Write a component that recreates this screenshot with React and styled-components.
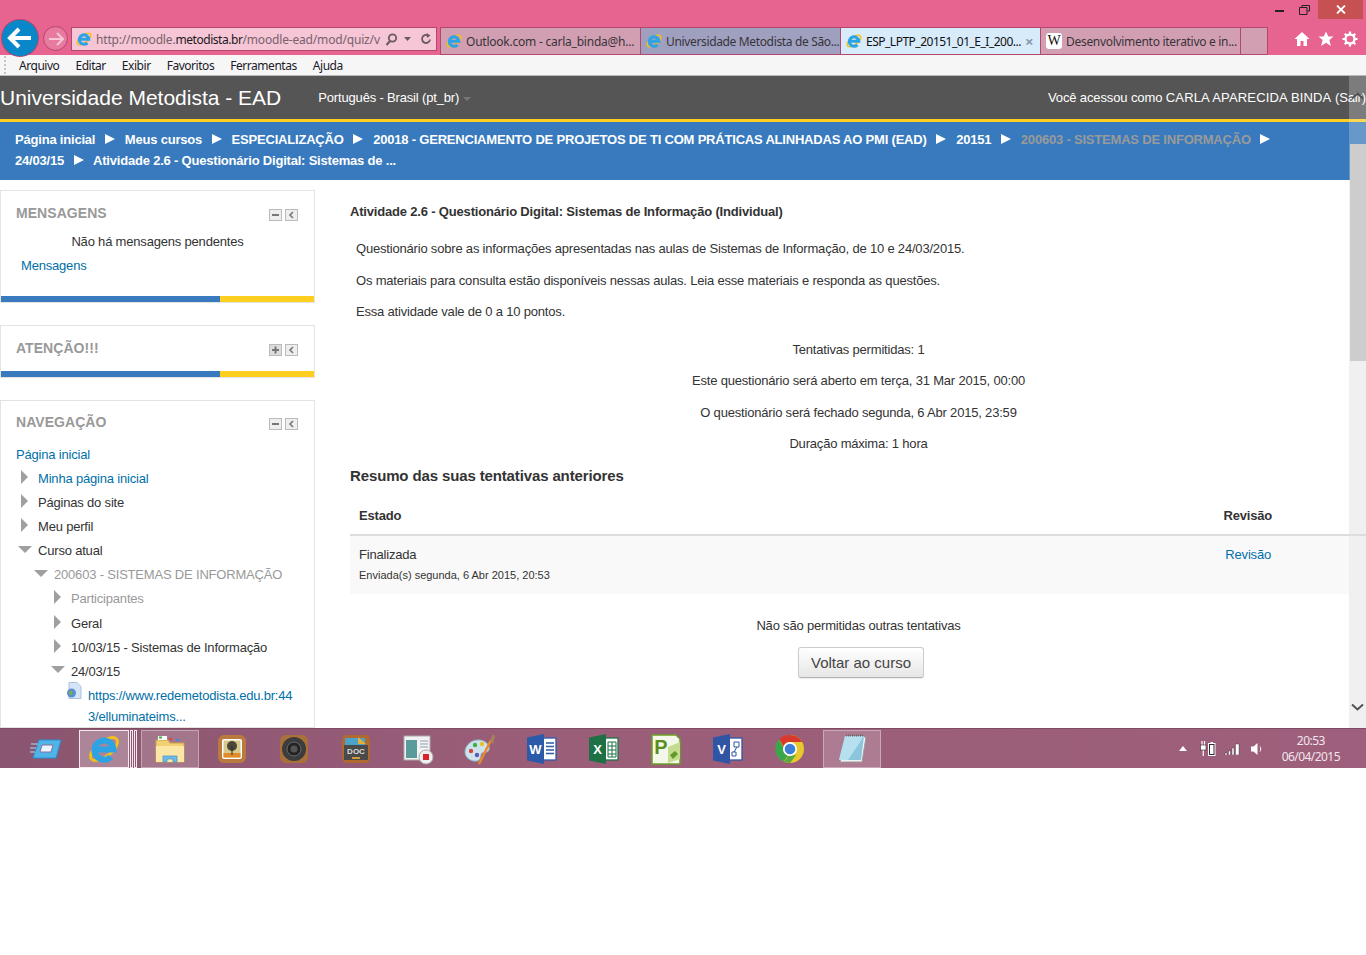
import React from "react";
import styled, { createGlobalStyle } from "styled-components";

const GlobalStyle = createGlobalStyle`
  html, body {
    margin: 0;
    background: #fff;
  }
  body {
    font-family: "Liberation Sans", Arial, sans-serif;
    font-size: 13px;
    color: #333;
  }
`;

const Screen = styled.div`
  width: 1366px;
  height: 768px;
  display: flex;
  flex-direction: column;
  overflow: hidden;
`;

/* ---------- browser chrome ---------- */

const Chrome = styled.div`
  height: 55px;
  flex: none;
  background: #e6648f;
  display: flex;
  justify-content: space-between;
`;

const NavCluster = styled.div`
  display: flex;
  align-items: flex-start;
  padding-top: 27px;
`;

const BackButton = styled.div`
  width: 36px;
  height: 36px;
  margin: -7px 0 0 2px;
  border-radius: 50%;
  background: #0a87c8;
  box-shadow: 0 0 0 1px #b4476e;
  position: relative;
  z-index: 2;
  display: flex;
  align-items: center;
  justify-content: center;
`;

const ForwardButton = styled.div`
  width: 25px;
  height: 25px;
  margin: -1px 0 0 5px;
  box-sizing: border-box;
  border-radius: 50%;
  border: 1px solid #b4476e;
  background: #e97a9f;
  display: flex;
  align-items: center;
  justify-content: center;
`;

const AddressBar = styled.div`
  width: 366px;
  height: 24px;
  margin-left: 3px;
  border: 1px solid #b4476e;
  background: #f6c5d6;
  display: flex;
  align-items: center;
  font-family: "Noto Sans", sans-serif;
  font-size: 12px;
  padding-left: 4px;
  box-sizing: border-box;
`;

const Url = styled.div`
  width: 285px;
  margin-left: 4px;
  white-space: nowrap;
  color: #77626a;
  letter-spacing: -0.17px;
  b {
    font-weight: 400;
    color: #1a1a1a;
    letter-spacing: -0.45px;
  }
`;

const AddressTools = styled.div`
  display: flex;
  align-items: center;
  gap: 6px;
  margin-left: 4px;
`;

const Tabs = styled.div`
  display: flex;
  height: 28px;
  margin-left: 3px;
  border: solid #b4476e;
  border-width: 1px 0 1px 1px;
  box-sizing: border-box;
`;

const Tab = styled.div`
  width: 200px;
  box-sizing: border-box;
  border-right: 1px solid #b4476e;
  background: ${(p) => p.$bg};
  color: ${(p) => (p.$active ? "#111" : "#38343a")};
  display: flex;
  align-items: center;
  padding-left: 5px;
  gap: 4px;
  font-family: "Noto Sans", sans-serif;
  font-size: 12px;
  white-space: nowrap;
  overflow: hidden;
`;

const TabTitle = styled.span`
  flex: 1;
  letter-spacing: ${(p) => p.$spacing}px;
`;

const TabClose = styled.span`
  color: #8a9aa8;
  font-size: 15px;
  width: 15px;
  font-weight: 700;
  line-height: 1;
`;

const NewTab = styled.div`
  width: 27px;
  box-sizing: border-box;
  background: #d19fb1;
  border-right: 1px solid #b4476e;
`;

const WikiBadge = styled.span`
  width: 16px;
  height: 16px;
  background: #fff;
  border-radius: 3px;
  color: #111;
  font-family: "Liberation Serif", serif;
  font-size: 14px;
  line-height: 16px;
  text-align: center;
  flex: none;
`;

const RightCluster = styled.div`
  display: flex;
  flex-direction: column;
  align-items: flex-end;
`;

const WindowControls = styled.div`
  display: flex;
  height: 19px;
  align-items: center;
  padding-right: 3px;
`;

const WindowButton = styled.div`
  width: ${(p) => p.$width}px;
  height: 19px;
  background: ${(p) => (p.$close ? "#c75052" : "transparent")};
  display: flex;
  align-items: center;
  justify-content: center;
`;

const Toolbar = styled.div`
  display: flex;
  gap: 8px;
  padding: 12px 8px 0 0;
`;

const MenuBar = styled.div`
  height: 21px;
  flex: none;
  box-sizing: border-box;
  background: #f6f6f6;
  border-bottom: 1px solid #b9b9b9;
  display: flex;
  align-items: center;
  gap: 16px;
  padding-left: 4px;
  font-family: "Noto Sans", sans-serif;
  font-size: 12px;
  letter-spacing: -0.46px;
  color: #1a1a2a;
`;

const MenuGrip = styled.div`
  width: 2px;
  height: 18px;
  margin-right: -3px;
  background: repeating-linear-gradient(#c4c4c4 0 2px, transparent 2px 4px);
`;

/* ---------- page ---------- */

const Page = styled.div`
  position: relative;
  height: 652px;
  flex: none;
  overflow: hidden;
  background: #fff;
`;

const SiteHeader = styled.header`
  height: 46px;
  box-sizing: border-box;
  background: #555;
  border-bottom: 3px solid #ffcf1f;
  color: #fff;
  display: flex;
  align-items: center;
  justify-content: space-between;
  white-space: nowrap;
`;

const HeaderLeft = styled.div`
  display: flex;
  align-items: center;
`;

const Brand = styled.a`
  font-size: 21px;
`;

const Language = styled.span`
  margin-left: 37px;
  letter-spacing: -0.17px;
  display: flex;
  align-items: center;
`;

const Caret = styled.i`
  width: 0;
  height: 0;
  margin: 2px 0 0 4px;
  border: 4px solid transparent;
  border-top-color: #777;
  border-bottom: 0;
`;

const Login = styled.div`
  letter-spacing: -0.12px;
  b {
    font-weight: 400;
    letter-spacing: 0.16px;
  }
`;

const Breadcrumb = styled.nav`
  height: 58px;
  box-sizing: border-box;
  background: #387abd;
  padding: 7px 80px 0 15px;
  color: #fff;
  font-weight: 700;
  line-height: 21px;
  letter-spacing: -0.2px;
`;

const Crumb = styled.span`
  color: ${(p) => (p.$muted ? "#9a9a9a" : "#fff")};
  white-space: nowrap;
`;

const CrumbSep = styled.span`
  display: inline-block;
  width: 0;
  height: 0;
  margin: 0 6.6px 0 9.5px;
  border-style: solid;
  border-width: 5px 0 5px 10px;
  border-color: transparent transparent transparent #fff;
`;

const Columns = styled.div`
  display: flex;
  align-items: flex-start;
`;

const Sidebar = styled.aside`
  width: 315px;
  flex: none;
  padding-top: 10px;
  display: flex;
  flex-direction: column;
  gap: 22px;
`;

const Block = styled.section`
  border: 1px solid #e3e3e3;
  box-sizing: border-box;
`;

const BlockHead = styled.div`
  height: 24px;
  margin-top: ${(p) => p.$top || 10}px;
  padding: 0 16px 0 15px;
  display: flex;
  align-items: center;
  justify-content: space-between;
  h2 {
    margin: 0;
    font-size: 14px;
    font-weight: 700;
    color: #999;
    letter-spacing: 0.05px;
  }
`;

const BlockTools = styled.div`
  display: flex;
  gap: 3px;
  margin-top: 4px;
`;

const BlockBody = styled.div`
  padding: 5px 0 18px;
  line-height: 24px;
  letter-spacing: -0.19px;
`;

const Centered = styled.div`
  text-align: center;
`;

const Link = styled.a`
  color: #0070a8;
`;

const BlockLink = styled(Link)`
  display: block;
  padding-left: 20px;
`;

const BlockBar = styled.div`
  height: 6px;
  margin-top: ${(p) => p.$gap || 0}px;
  background: linear-gradient(90deg, #387abd 0 219px, #ffcf1f 219px);
`;

const NavTree = styled.div`
  padding-top: 8px;
  letter-spacing: -0.19px;
`;

const NavRow = styled.div`
  height: 24.15px;
  display: flex;
  align-items: center;
  padding-left: ${(p) => p.$indent}px;
  color: ${(p) => (p.$muted ? "#999" : "#333")};
  white-space: nowrap;
`;

const NavLeaf = styled.div`
  display: flex;
  align-items: flex-start;
  padding: 2px 0 0 65px;
  line-height: 21px;
`;

const LeafLink = styled(Link)`
  width: 210px;
  word-break: break-all;
`;

const LeafIcon = styled.svg`
  width: 16px;
  height: 17px;
  flex: none;
  margin: -3px 6px 0 0;
`;

const NavSlot = styled.span`
  width: 22px;
  flex: none;
  display: flex;
  align-items: center;
  padding-left: ${(p) => (p.$open ? 2 : 5)}px;
  box-sizing: border-box;
`;

const ArrowRight = styled.i`
  width: 0;
  height: 0;
  margin-top: -3px;
  border-style: solid;
  border-width: 7px 0 7px 7px;
  border-color: transparent transparent transparent #a0a0a0;
`;

const ArrowDown = styled.i`
  width: 0;
  height: 0;
  margin-top: -3px;
  border-style: solid;
  border-width: 7px 7px 0 7px;
  border-color: #a0a0a0 transparent transparent transparent;
`;

const Main = styled.main`
  flex: 1;
  min-width: 0;
  padding: 23px 0 0 35px;
  letter-spacing: -0.19px;
`;

const ActivityTitle = styled.div`
  font-weight: 700;
  line-height: 18px;
  margin-bottom: 19px;
  letter-spacing: -0.18px;
`;

const Intro = styled.p`
  margin: 0 0 13.6px 6px;
  line-height: 18px;
`;

const InfoBlock = styled.div`
  padding-top: 6px;
  margin-bottom: -1px;
`;

const InfoLine = styled.p`
  margin: 0 0 13.5px;
  width: 1017px;
  text-align: center;
  line-height: 18px;
`;

const SectionTitle = styled.h3`
  margin: 0;
  font-size: 15px;
  line-height: 20px;
  font-weight: 700;
  letter-spacing: -0.13px;
`;

const Attempts = styled.div`
  margin-top: 10px;
`;

const AttemptsHead = styled.div`
  height: 40px;
  box-sizing: border-box;
  border-bottom: 2px solid #ddd;
  display: flex;
  align-items: center;
  justify-content: space-between;
  padding: 1px 94px 0 9px;
  font-weight: 700;
  position: relative;
  z-index: 1;
`;

const AttemptRow = styled.div`
  height: 58px;
  background: #f9f9f9;
  display: flex;
  justify-content: space-between;
  padding: 9px 95px 0 9px;
  box-sizing: border-box;
  line-height: 20px;
`;

const Submitted = styled.div`
  margin-top: -1px;
  font-size: 11px;
  line-height: 22px;
  letter-spacing: 0;
`;

const Closing = styled.div`
  width: 1017px;
  margin-top: 23px;
  text-align: center;
  line-height: 18px;
`;

const BackToCourse = styled.button`
  display: block;
  margin: 12px 0 0 448px;
  width: 126px;
  height: 31px;
  padding: 0;
  border: 1px solid #ccc;
  border-bottom-color: #b3b3b3;
  border-radius: 3px;
  background: linear-gradient(#fff, #e6e6e6);
  color: #444;
  font-family: inherit;
  font-size: 15px;
  box-shadow: 0 1px 1px rgba(0, 0, 0, 0.08);
`;

const Scrollbar = styled.div`
  position: absolute;
  top: 0;
  right: 0;
  bottom: 0;
  width: 17px;
  background: linear-gradient(rgba(240, 240, 240, 0.25) 0 104px, #f0f0f0 104px);
  display: flex;
  flex-direction: column;
  align-items: center;
  justify-content: space-between;
  padding: 16px 0 17px;
  box-sizing: border-box;
`;

const ScrollThumb = styled.div`
  position: absolute;
  top: 68px;
  left: 1px;
  right: 0;
  height: 217px;
  background: #cdcdcd;
`;

/* ---------- taskbar ---------- */

const Taskbar = styled.footer`
  height: 40px;
  flex: none;
  border-top: 1px solid #7e4a64;
  box-sizing: border-box;
  background: linear-gradient(90deg, #8a5570, #9b5e79 40%, #9d5f7b);
  display: flex;
  align-items: center;
  padding-left: 17px;
`;

const TaskSlot = styled.div`
  width: 58px;
  margin-right: 4px;
  height: 38px;
  box-sizing: border-box;
  display: flex;
  align-items: center;
  justify-content: center;
  ${(p) =>
    p.$on &&
    `background: rgba(255,255,255,.18); box-shadow: inset 0 0 0 1px rgba(255,255,255,.35);`}
`;

const IeTaskButton = styled.div`
  width: 50px;
  height: 38px;
  box-sizing: border-box;
  background: rgba(255, 255, 255, 0.28);
  border: 1px solid #f4e9ee;
  display: flex;
  align-items: center;
  justify-content: center;
`;

const StackEdge = styled.div`
  width: 3px;
  height: 38px;
  margin-left: 1px;
  box-sizing: border-box;
  border: 1px solid #f4e9ee;
`;

const StackGap = styled.div`
  width: 4px;
  flex: none;
`;

const Tray = styled.div`
  margin-left: auto;
  display: flex;
  align-items: center;
  padding-right: 26px;
`;

const TrayIcons = styled.div`
  display: flex;
  align-items: center;
  gap: 8px;
  margin-right: 19px;
`;

const Clock = styled.div`
  font-family: "Noto Sans", sans-serif;
  font-size: 12px;
  line-height: 16px;
  text-align: center;
  color: #f3e6ec;
  letter-spacing: -0.55px;
`;

/* ---------- drawn icons ---------- */

const IeLogo = ({ size = 16 }) => (
  <svg width={size} height={size} viewBox="0 0 32 32" style={{ flex: "none" }}>
    <ellipse cx="16" cy="16" rx="16" ry="7.500" fill="none" stroke="#f2bf1c" strokeWidth="3" transform="rotate(-38 16 16)" />
    <path d="M6.500 16.500H25.500A9.500 9.500 0 1 0 22.800 23.800" fill="none" stroke="#2ba3e4" strokeWidth="6" />
  </svg>
);

const Chevron = ({ flip }) => (
  <svg width="13" height="8" viewBox="0 0 13 8" style={{ transform: flip ? "rotate(180deg)" : "none", zIndex: 1 }}>
    <path d="M1 1.500l5.500 5 5.500-5" fill="none" stroke="#505050" strokeWidth="2" />
  </svg>
);

const BlockIcon = ({ kind }) => (
  <svg width="13" height="12" viewBox="0 0 13 12">
    <rect x=".5" y=".5" width="12" height="11" fill={kind === "plus" ? "#ddd" : "#eee"} stroke="#bbb" />
    {kind === "minus" && <rect x="3" y="5" width="7" height="2" fill="#777" />}
    {kind === "plus" && <path d="M3 6h7M6.500 2.500v7" stroke="#777" strokeWidth="2" />}
    {kind === "left" && <path d="M8 3L5 6l3 3" fill="none" stroke="#777" strokeWidth="1.600" />}
  </svg>
);

const StartIcon = () => (
  <svg width="32" height="24" viewBox="0 0 32 24">
    <path d="M9 3h22l-5 18H3z" fill="#4fb4e8" stroke="#2a8fd0" />
    <path d="M12 8h11l-2 7H10z" fill="#eaf6fc" stroke="#8a6ea0" />
    <path d="M1 7h7M0 11h6M0 15h5" stroke="#a9d9f2" />
  </svg>
);

const FolderIcon = () => (
  <svg width="32" height="30" viewBox="0 0 32 30">
    <path d="M2 6h12l2 3h14v19H2z" fill="#f2cf72" stroke="#c9a24e" />
    <path d="M4 2h9v4H4z" fill="#fff" />
    <rect x="5" y="2.500" width="3" height="2" fill="#3fae49" />
    <rect x="15" y="4" width="3" height="2" fill="#d9453c" />
    <rect x="22" y="5" width="3" height="2" fill="#3a8fd8" />
    <path d="M2 12h28v16H2z" fill="#fbe6a6" />
    <path d="M9 28v-6h14v6h-4v-3h-6v3z" fill="#6dbbe8" stroke="#3f8fc4" strokeWidth=".7" />
  </svg>
);

const PhotoAppIcon = () => (
  <svg width="30" height="30" viewBox="0 0 30 30">
    <rect x="1" y="1" width="28" height="28" rx="6" fill="#b87a3f" />
    <rect x="5" y="5" width="20" height="20" rx="2" fill="#fff" />
    <rect x="6.500" y="6.500" width="17" height="17" fill="#d9c88c" />
    <rect x="6.500" y="19" width="17" height="4.500" fill="#e08a28" />
    <circle cx="15" cy="12" r="5" fill="#4c4838" />
    <path d="M15 12v9" stroke="#2b2a22" />
  </svg>
);

const SpeakerIcon = () => (
  <svg width="30" height="30" viewBox="0 0 30 30">
    <rect x="1" y="1" width="28" height="28" rx="6" fill="#a9703a" />
    <circle cx="15" cy="15" r="12" fill="#3c3c3c" />
    <circle cx="15" cy="15" r="7" fill="#242424" stroke="#6a6a6a" />
    <circle cx="15" cy="15" r="3.500" fill="#555" />
  </svg>
);

const DocIcon = () => (
  <svg width="30" height="30" viewBox="0 0 30 30">
    <rect x="1" y="1" width="28" height="28" rx="5" fill="#b06a30" />
    <path d="M4 4h20v8H4z" fill="#4ba3c7" />
    <path d="M17 3l8 7h-8z" fill="#e2b13a" />
    <path d="M3 11h24v15H3z" fill="#4a4a4a" />
    <text x="15" y="20" textAnchor="middle" fontSize="8" fontWeight="700" fill="#ddd" fontFamily="Liberation Sans">DOC</text>
    <rect x="11" y="23" width="8" height="2" fill="#d49a3a" />
  </svg>
);

const RecorderIcon = () => (
  <svg width="32" height="32" viewBox="0 0 32 32">
    <rect x="2" y="3" width="26" height="24" fill="#f2f2f2" stroke="#aaa" />
    <rect x="4" y="7" width="11" height="18" fill="#5a9a9a" />
    <path d="M18 8h8M18 11h8M18 14h8" stroke="#8fa0b0" />
    <circle cx="24" cy="24" r="7" fill="#eee" stroke="#aaa" />
    <rect x="21" y="21" width="6" height="6" fill="#d8232a" />
  </svg>
);

const PaintIcon = () => (
  <svg width="32" height="32" viewBox="0 0 32 32">
    <path d="M1 19c0-7 7-13 15-12 7 1 10 6 9 10-1 3-5 2-7 3s0 7-5 8c-7 1-12-4-12-9z" fill="#cfe3ec" stroke="#8fb3c4" />
    <circle cx="7" cy="18" r="2.200" fill="#d9453c" />
    <circle cx="11" cy="12" r="2.200" fill="#3fae49" />
    <circle cx="18" cy="11" r="2.200" fill="#e8c02c" />
    <circle cx="13" cy="22" r="2.200" fill="#5a5ab8" />
    <path d="M15 31L27 7" stroke="#e88a2c" strokeWidth="2.500" />
    <path d="M26 8l3-7 2 2-2 8z" fill="#a88258" />
  </svg>
);

const OfficeIcon = ({ color, letter, children }) => (
  <svg width="32" height="32" viewBox="0 0 32 32">
    <rect x="14" y="5" width="16" height="22" fill="#fff" stroke={color} strokeWidth="1.300" />
    {children}
    <path d="M1 4.500L18 1v30L1 27.500z" fill={color} />
    <text x="9.500" y="21" textAnchor="middle" fontSize="13" fontWeight="700" fill="#fff" fontFamily="Liberation Sans">{letter}</text>
  </svg>
);

const ProjectIcon = () => (
  <svg width="32" height="32" viewBox="0 0 32 32">
    <path d="M2 2h24l4 4v25H2z" fill="#f4f8ea" stroke="#6a9e26" strokeWidth="1.500" />
    <path d="M18 14l12-5v17l-12 4z" fill="#c4dc8e" />
    <path d="M20 22l5-4 3 3-5 5z" fill="#5f9a2a" />
    <text x="11" y="21" textAnchor="middle" fontSize="20" fontWeight="700" fill="#5a8f1e" fontFamily="Liberation Sans">P</text>
  </svg>
);

const ChromeIcon = () => (
  <svg width="30" height="30" viewBox="0 0 30 30">
    <circle cx="15" cy="15" r="14" fill="#e8c82c" />
    <path d="M15 1a14 14 0 0 1 12.100 7H15a7 7 0 0 0-6.500 4.400L4 5.300A14 14 0 0 1 15 1z" fill="#d9382c" />
    <path d="M4 5.300l4.600 8.500A7 7 0 0 0 13 21.700L8.800 27.600A14 14 0 0 1 4 5.300z" fill="#3ba54a" />
    <path d="M13 21.700c-1 3-2.800 5-4.200 5.900A14 14 0 0 0 15 29l6-8z" fill="#3ba54a" opacity=".85" />
    <circle cx="15" cy="15" r="7" fill="#fff" />
    <circle cx="15" cy="15" r="5.300" fill="#3d7fd8" />
  </svg>
);

const NotepadIcon = () => (
  <svg width="32" height="32" viewBox="0 0 32 32">
    <path d="M10 4h20l-4 25H4z" fill="#f2f2f2" stroke="#9a9a9a" />
    <path d="M9 3h19l-3 24H3z" fill="#8cc6dc" />
    <path d="M9 3h19l-16 24H3z" fill="#b6e0ee" />
    <path d="M10 2.500h18" stroke="#666" strokeDasharray="1 1" strokeWidth="2" />
  </svg>
);

const HomeIcon = () => (
  <svg width="16" height="16" viewBox="0 0 16 16">
    <path d="M8 1L.5 8H3v7h3.500v-5h3v5H13V8h2.500z" fill="#fff" />
  </svg>
);

const StarIcon = () => (
  <svg width="16" height="16" viewBox="0 0 16 16">
    <path d="M8 .5l2.300 5h5.200l-4.100 3.500 1.500 6L8 11.700 3.100 15l1.500-6L.5 5.500h5.200z" fill="#fff" />
  </svg>
);

const GearIcon = () => (
  <svg width="16" height="16" viewBox="0 0 16 16">
    <circle cx="8" cy="8" r="4.500" fill="none" stroke="#fff" strokeWidth="2.400" />
    <path d="M8 .5v3M8 12.500v3M.5 8h3M12.500 8h3M2.700 2.700l2.100 2.100M11.200 11.200l2.100 2.100M13.300 2.700l-2.100 2.100M4.800 11.200l-2.100 2.100" stroke="#fff" strokeWidth="2.200" />
  </svg>
);

const PowerIcon = () => (
  <svg width="16" height="15" viewBox="0 0 16 15" style={{ marginLeft: 5 }}>
    <path d="M2 0v4M4.500 0v4M3.250 9v6" stroke="#fff" strokeWidth="1.200" />
    <rect x=".5" y="4" width="5.500" height="5" fill="#fff" stroke="#3a2a32" strokeWidth=".6" />
    <rect x="8.500" y="2.500" width="6.500" height="12" fill="#3a2a32" stroke="#fff" />
    <rect x="10" y="4" width="3.500" height="9" fill="#fff" />
    <rect x="10.500" y="1" width="2.500" height="1.500" fill="#fff" />
  </svg>
);

const tabs = [
  { title: "Outlook.com - carla_binda@h...", bg: "#d19fb1", spacing: -0.23 },
  { title: "Universidade Metodista de São...", bg: "#9fa0c0", spacing: -0.35 },
  { title: "ESP_LPTP_20151_01_E_I_200...", bg: "#d8ebfb", active: true, spacing: -0.5 },
  { title: "Desenvolvimento iterativo e in...", bg: "#d19fb1", wiki: true, spacing: -0.3 },
];

const crumbs = [
  { label: "Página inicial" },
  { label: "Meus cursos" },
  { label: "ESPECIALIZAÇÃO" },
  { label: "20018 - GERENCIAMENTO DE PROJETOS DE TI COM PRÁTICAS ALINHADAS AO PMI (EAD)" },
  { label: "20151" },
  { label: "200603 - SISTEMAS DE INFORMAÇÃO", muted: true },
  { label: "24/03/15" },
  { label: "Atividade 2.6 - Questionário Digital: Sistemas de ...", last: true },
];

const navItems = [
  { text: "Página inicial", indent: 15, link: true, bare: true },
  { text: "Minha página inicial", indent: 15, link: true },
  { text: "Páginas do site", indent: 15 },
  { text: "Meu perfil", indent: 15 },
  { text: "Curso atual", indent: 15, open: true },
  { text: "200603 - SISTEMAS DE INFORMAÇÃO", indent: 31, open: true, muted: true },
  { text: "Participantes", indent: 48, muted: true },
  { text: "Geral", indent: 48 },
  { text: "10/03/15 - Sistemas de Informação", indent: 48 },
  { text: "24/03/15", indent: 48, open: true },
];

const App = () => {
  return (
    <>
      <GlobalStyle />
      <Screen>
        <Chrome>
          <NavCluster>
            <BackButton>
              <svg width="26" height="24" viewBox="0 0 26 24">
                <path d="M12 3L3 12l9 9M3 12h21" fill="none" stroke="#fff" strokeWidth="4" />
              </svg>
            </BackButton>
            <ForwardButton>
              <svg width="16" height="14" viewBox="0 0 16 14">
                <path d="M9 1l6 6-6 6M15 7H1" fill="none" stroke="#f6c5d6" strokeWidth="2" />
              </svg>
            </ForwardButton>
            <AddressBar>
              <IeLogo size={16} />
              <Url>
                http://moodle.<b>metodista.br</b>/moodle-ead/mod/quiz/v
              </Url>
              <AddressTools>
                <svg width="13" height="13" viewBox="0 0 13 13">
                  <circle cx="7.500" cy="5" r="3.700" fill="none" stroke="#6a5a62" strokeWidth="1.800" />
                  <path d="M5 8l-3.500 4" stroke="#6a5a62" strokeWidth="2" />
                </svg>
                <svg width="7" height="4" viewBox="0 0 7 4">
                  <path d="M0 0h7L3.500 4z" fill="#6a5a62" />
                </svg>
                <svg width="12" height="12" viewBox="0 0 12 12" style={{ marginLeft: 3 }}>
                  <path d="M10 6.500A4 4 0 1 1 8 2.500" fill="none" stroke="#6a5a62" strokeWidth="1.800" />
                  <path d="M6.500 0l4 2.500-3.500 2.500z" fill="#6a5a62" />
                </svg>
              </AddressTools>
            </AddressBar>
            <Tabs>
              {tabs.map((tab) => (
                <Tab key={tab.title} $bg={tab.bg} $active={tab.active}>
                  {tab.wiki ? <WikiBadge>W</WikiBadge> : <IeLogo size={16} />}
                  <TabTitle $spacing={tab.spacing}>{tab.title}</TabTitle>
                  {tab.active && <TabClose>×</TabClose>}
                </Tab>
              ))}
              <NewTab />
            </Tabs>
          </NavCluster>
          <RightCluster>
            <WindowControls>
              <WindowButton $width={23}>
                <svg width="9" height="2" viewBox="0 0 9 2" style={{ marginTop: 3 }}>
                  <rect width="9" height="2" fill="#222" />
                </svg>
              </WindowButton>
              <WindowButton $width={27}>
                <svg width="11" height="10" viewBox="0 0 11 10">
                  <path d="M3 2V.5h7.500V6H8.500M.5 2.500h7.500v7H.5z" fill="none" stroke="#222" />
                </svg>
              </WindowButton>
              <WindowButton $width={45} $close>
                <svg width="10" height="9" viewBox="0 0 10 9">
                  <path d="M1 .5l8 8M9 .5l-8 8" stroke="#fff" strokeWidth="1.800" />
                </svg>
              </WindowButton>
            </WindowControls>
            <Toolbar>
              <HomeIcon />
              <StarIcon />
              <GearIcon />
            </Toolbar>
          </RightCluster>
        </Chrome>

        <MenuBar>
          <MenuGrip />
          {["Arquivo", "Editar", "Exibir", "Favoritos", "Ferramentas", "Ajuda"].map((m) => (
            <span key={m}>{m}</span>
          ))}
        </MenuBar>

        <Page>
          <SiteHeader>
            <HeaderLeft>
              <Brand>Universidade Metodista - EAD</Brand>
              <Language>
                Português - Brasil (pt_br)
                <Caret />
              </Language>
            </HeaderLeft>
            <Login>
              Você acessou como <b>CARLA APARECIDA BINDA</b> (Sair)
            </Login>
          </SiteHeader>
          <Breadcrumb>
            {crumbs.map((c) => (
              <React.Fragment key={c.label}>
                <Crumb $muted={c.muted}>{c.label}</Crumb>
                {!c.last && <CrumbSep />}{" "}
              </React.Fragment>
            ))}
          </Breadcrumb>
          <Columns>
            <Sidebar>
              <Block>
                <BlockHead>
                  <h2>MENSAGENS</h2>
                  <BlockTools>
                    <BlockIcon kind="minus" />
                    <BlockIcon kind="left" />
                  </BlockTools>
                </BlockHead>
                <BlockBody>
                  <Centered>Não há mensagens pendentes</Centered>
                  <BlockLink>Mensagens</BlockLink>
                </BlockBody>
                <BlockBar />
              </Block>
              <Block>
                <BlockHead>
                  <h2>ATENÇÃO!!!</h2>
                  <BlockTools>
                    <BlockIcon kind="plus" />
                    <BlockIcon kind="left" />
                  </BlockTools>
                </BlockHead>
                <BlockBar $gap={11} />
              </Block>
              <Block>
                <BlockHead $top={9}>
                  <h2>NAVEGAÇÃO</h2>
                  <BlockTools>
                    <BlockIcon kind="minus" />
                    <BlockIcon kind="left" />
                  </BlockTools>
                </BlockHead>
                <NavTree>
                  {navItems.map((n) => (
                    <NavRow key={n.text} $indent={n.indent} $muted={n.muted}>
                      {!n.bare && (
                        <NavSlot $open={n.open}>{n.open ? <ArrowDown /> : <ArrowRight />}</NavSlot>
                      )}
                      {n.link ? <Link>{n.text}</Link> : n.text}
                    </NavRow>
                  ))}
                  <NavLeaf>
                    <LeafIcon viewBox="0 0 16 17">
                      <path d="M3 .5h8l4 4v12H3z" fill="#d5e4f7" stroke="#a9c3e3" />
                      <circle cx="5.500" cy="11" r="4.500" fill="#5b8fd0" />
                      <path d="M3 9c2-1 4 1 3 3s-3 1-3-3z" fill="#7cb342" />
                    </LeafIcon>
                    <LeafLink>https://www.redemetodista.edu.br:443/elluminateims...</LeafLink>
                  </NavLeaf>
                </NavTree>
              </Block>
            </Sidebar>

            <Main>
              <ActivityTitle>Atividade 2.6 - Questionário Digital: Sistemas de Informação (Individual)</ActivityTitle>
              <Intro>Questionário sobre as informações apresentadas nas aulas de Sistemas de Informação, de 10 e 24/03/2015.</Intro>
              <Intro>Os materiais para consulta estão disponíveis nessas aulas. Leia esse materiais e responda as questões.</Intro>
              <Intro>Essa atividade vale de 0 a 10 pontos.</Intro>
              <InfoBlock>
                <InfoLine>Tentativas permitidas: 1</InfoLine>
                <InfoLine>Este questionário será aberto em terça, 31 Mar 2015, 00:00</InfoLine>
                <InfoLine>O questionário será fechado segunda, 6 Abr 2015, 23:59</InfoLine>
                <InfoLine>Duração máxima: 1 hora</InfoLine>
              </InfoBlock>
              <SectionTitle>Resumo das suas tentativas anteriores</SectionTitle>
              <Attempts>
                <AttemptsHead>
                  <span>Estado</span>
                  <span>Revisão</span>
                </AttemptsHead>
                <AttemptRow>
                  <div>
                    Finalizada
                    <Submitted>Enviada(s) segunda, 6 Abr 2015, 20:53</Submitted>
                  </div>
                  <Link>Revisão</Link>
                </AttemptRow>
              </Attempts>
              <Closing>Não são permitidas outras tentativas</Closing>
              <BackToCourse>Voltar ao curso</BackToCourse>
            </Main>
          </Columns>
          <Scrollbar>
            <ScrollThumb />
            <Chevron flip />
            <Chevron />
          </Scrollbar>
        </Page>

        <Taskbar>
          <TaskSlot>
            <StartIcon />
          </TaskSlot>
          <IeTaskButton>
            <IeLogo size={32} />
          </IeTaskButton>
          <StackEdge />
          <StackEdge />
          <StackGap />
          <TaskSlot $on>
            <FolderIcon />
          </TaskSlot>
          <TaskSlot><PhotoAppIcon /></TaskSlot>
          <TaskSlot><SpeakerIcon /></TaskSlot>
          <TaskSlot><DocIcon /></TaskSlot>
          <TaskSlot><RecorderIcon /></TaskSlot>
          <TaskSlot><PaintIcon /></TaskSlot>
          <TaskSlot>
            <OfficeIcon color="#2b5aa8" letter="W">
              <path d="M20 10h8M20 13.500h8M20 17h8M20 20.500h8" stroke="#2b5aa8" strokeWidth="1.500" />
            </OfficeIcon>
          </TaskSlot>
          <TaskSlot>
            <OfficeIcon color="#1e7145" letter="X">
              <path d="M20 9h8v15h-8zM20 13h8M20 17h8M20 21h8M24 9v15" fill="none" stroke="#1e7145" />
            </OfficeIcon>
          </TaskSlot>
          <TaskSlot><ProjectIcon /></TaskSlot>
          <TaskSlot>
            <OfficeIcon color="#2f55a4" letter="V">
              <path d="M22 9h5v5h-5zM20 19h4v4h-4zM25 14l-3 5" fill="none" stroke="#2f55a4" />
            </OfficeIcon>
          </TaskSlot>
          <TaskSlot><ChromeIcon /></TaskSlot>
          <TaskSlot $on><NotepadIcon /></TaskSlot>
          <Tray>
            <TrayIcons>
              <svg width="8" height="5" viewBox="0 0 8 5">
                <path d="M4 0l4 5H0z" fill="#fff" />
              </svg>
              <PowerIcon />
              <svg width="16" height="12" viewBox="0 0 16 12">
                <path d="M1 10h2v2H1zM4.500 8h2v4h-2zM8 5h2v7H8zM11.500 1H15v11h-3.500z" fill="#fff" stroke="#3a2a32" strokeWidth=".4" />
              </svg>
              <svg width="13" height="14" viewBox="0 0 13 14" style={{ marginLeft: 2 }}>
                <path d="M1 4.500h2.500L7.500 1v12L3.500 9.500H1z" fill="#fff" />
                <path d="M10 4.500c1 1.500 1 3.500 0 5" fill="none" stroke="#fff" />
              </svg>
            </TrayIcons>
            <Clock>
              20:53
              <br />
              06/04/2015
            </Clock>
          </Tray>
        </Taskbar>
      </Screen>
    </>
  );
};

export default App;
